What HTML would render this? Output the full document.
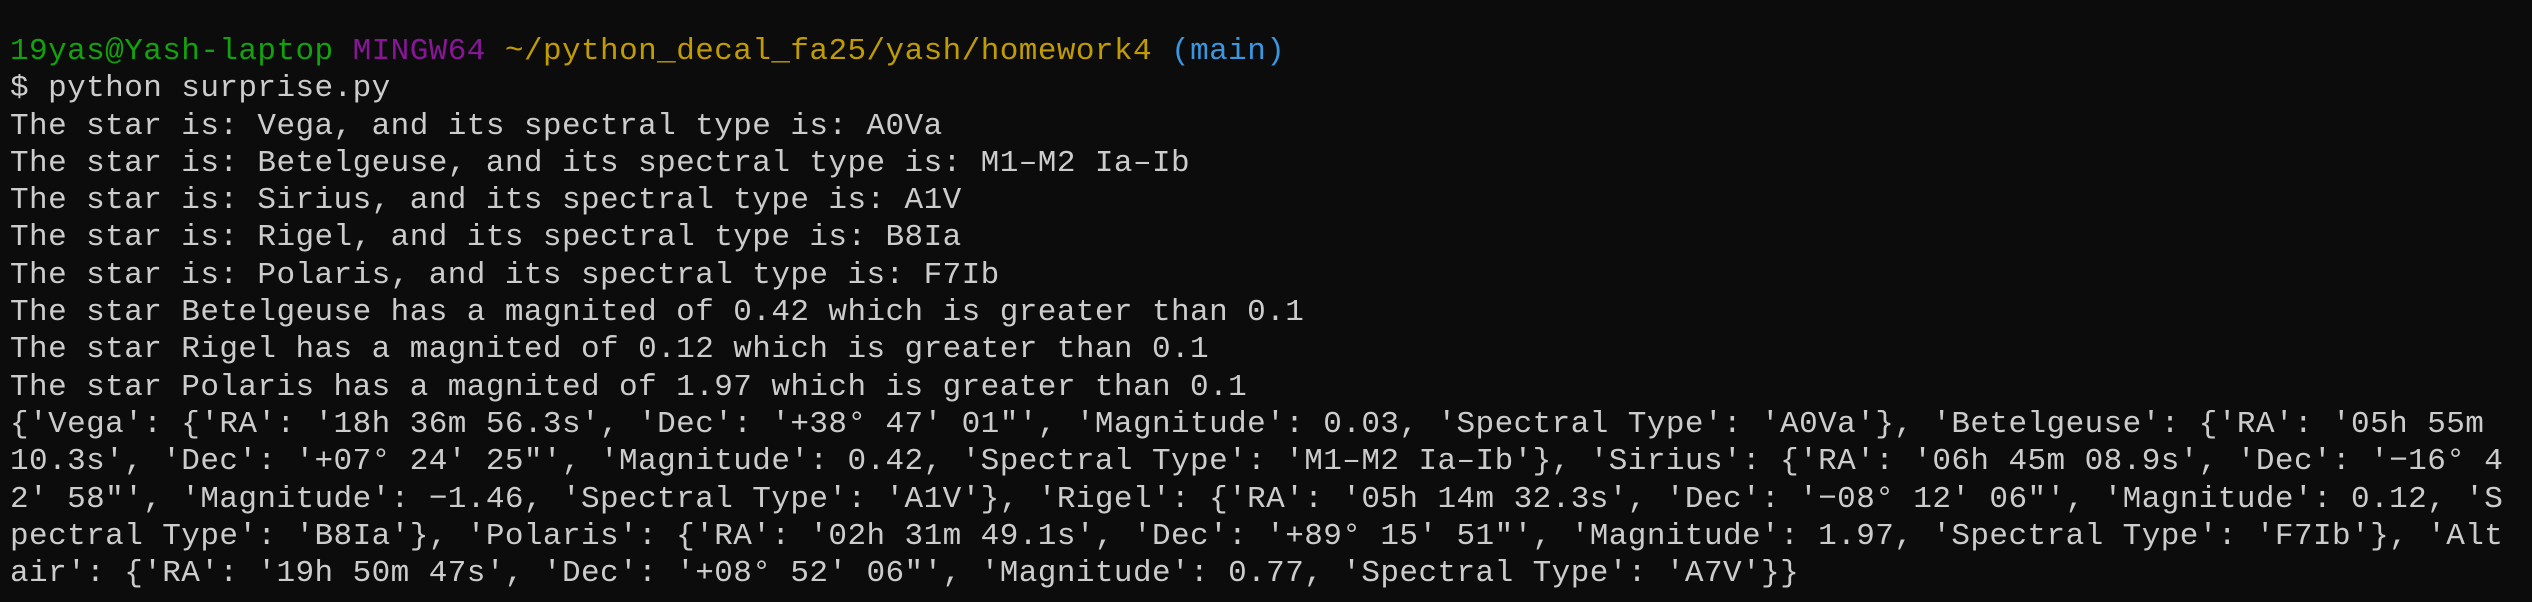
<!DOCTYPE html>
<html><head><meta charset="utf-8"><style>
html,body{margin:0;padding:0;background:#0c0c0c;width:2532px;height:602px;overflow:hidden}
pre{margin:0;position:absolute;left:10px;top:33px;font-family:"Liberation Mono","DejaVu Sans Mono",monospace;font-size:31px;letter-spacing:0.43px;line-height:37.3px;color:#cccccc;white-space:pre}
.g{color:#13a10e}.m{color:#881798}.y{color:#c19c00}.b{color:#3a96dd}
</style></head><body>
<pre><span class="g">19yas@Yash-laptop</span> <span class="m">MINGW64</span> <span class="y">~/python_decal_fa25/yash/homework4</span> <span class="b">(main)</span>
$ python surprise.py
The star is: Vega, and its spectral type is: A0Va
The star is: Betelgeuse, and its spectral type is: M1–M2 Ia–Ib
The star is: Sirius, and its spectral type is: A1V
The star is: Rigel, and its spectral type is: B8Ia
The star is: Polaris, and its spectral type is: F7Ib
The star Betelgeuse has a magnited of 0.42 which is greater than 0.1
The star Rigel has a magnited of 0.12 which is greater than 0.1
The star Polaris has a magnited of 1.97 which is greater than 0.1
{'Vega': {'RA': '18h 36m 56.3s', 'Dec': '+38° 47′ 01″', 'Magnitude': 0.03, 'Spectral Type': 'A0Va'}, 'Betelgeuse': {'RA': '05h 55m
10.3s', 'Dec': '+07° 24′ 25″', 'Magnitude': 0.42, 'Spectral Type': 'M1–M2 Ia–Ib'}, 'Sirius': {'RA': '06h 45m 08.9s', 'Dec': '−16° 4
2′ 58″', 'Magnitude': −1.46, 'Spectral Type': 'A1V'}, 'Rigel': {'RA': '05h 14m 32.3s', 'Dec': '−08° 12′ 06″', 'Magnitude': 0.12, 'S
pectral Type': 'B8Ia'}, 'Polaris': {'RA': '02h 31m 49.1s', 'Dec': '+89° 15′ 51″', 'Magnitude': 1.97, 'Spectral Type': 'F7Ib'}, 'Alt
air': {'RA': '19h 50m 47s', 'Dec': '+08° 52′ 06″', 'Magnitude': 0.77, 'Spectral Type': 'A7V'}}</pre>
</body></html>
